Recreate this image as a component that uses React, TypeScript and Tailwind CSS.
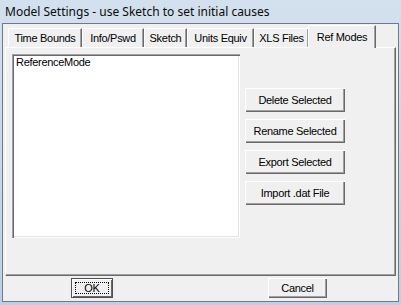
const tabs = [
  { label: "Time Bounds", width: 74 },
  { label: "Info/Pswd", width: 62 },
  { label: "Sketch", width: 43 },
  { label: "Units Equiv", width: 67 },
  { label: "XLS Files", width: 55 },
];

const actions = ["Delete Selected", "Rename Selected", "Export Selected", "Import .dat File"];

const raised =
  "shadow-[inset_1px_1px_#ffffff,inset_-1px_-1px_#696969,inset_-2px_-2px_#a0a0a0]";

export default function App() {
  return (
    <div
      className="flex h-[305px] w-[401px] flex-col overflow-hidden bg-gradient-to-b from-[#d3e0ee] via-[#c8d8ea] to-[#bccfe4] text-black"
      style={{ fontFamily: '"Liberation Sans", Arial, sans-serif' }}
    >
      {/* title bar */}
      <div
        className="flex h-[23px] shrink-0 items-center pl-[5px] text-[12px] text-[#0b0b0b]"
        style={{ fontFamily: '"Noto Sans", "Open Sans", sans-serif' }}
      >
        Model Settings - use Sketch to set initial causes
      </div>

      {/* client area */}
      <div className="mx-[2px] flex h-[279px] flex-col border border-[#6f7a86] bg-[#f0f0f0] pl-[2px] pr-[2px] pt-[1px] text-[11px] leading-[13px] tracking-[-0.3px]">
        {/* tab strip */}
        <div className="flex h-[22px] items-end pl-[3px]">
          {tabs.map((tab) => (
            <div
              key={tab.label}
              className="flex h-[19px] items-center justify-center border-l border-t border-white border-r border-r-[#696969] shadow-[inset_-1px_0_#a0a0a0]"
              style={{ width: tab.width }}
            >
              {tab.label}
            </div>
          ))}
          <div className="relative z-10 -mb-[1px] -ml-[1px] flex h-[23px] w-[68px] items-start justify-center border-l border-t border-white border-r border-r-[#696969] bg-[#f0f0f0] pt-[5px] shadow-[inset_-1px_0_#a0a0a0]">
            Ref Modes
          </div>
        </div>

        {/* tab panel */}
        <div className="flex h-[229px] border-l border-t border-white border-r border-b border-r-[#696969] border-b-[#696969] pl-[6px] pt-[6px] shadow-[inset_-1px_-1px_#a0a0a0]">
          <div className="h-[184px] w-[228px] bg-white pl-[4px] pt-[2px] shadow-[inset_1px_1px_#a0a0a0,inset_2px_2px_#696969,inset_-1px_-1px_#ffffff,inset_-2px_-2px_#e3e3e3]">
            ReferenceMode
          </div>
          <div className="ml-[5px] mt-[34px] flex flex-col gap-[7px]">
            {actions.map((a) => (
              <button key={a} className={`h-[24px] w-[100px] bg-[#f0f0f0] ${raised}`}>
                {a}
              </button>
            ))}
          </div>
        </div>

        {/* dialog buttons */}
        <div className="mt-[2px] flex">
          <button className="relative ml-[66px] h-[20px] w-[42px] border border-[#505050] bg-[#f0f0f0] shadow-[inset_1px_1px_#ffffff,inset_-1px_-1px_#696969]">
            <span className="absolute inset-[3px] border border-dotted border-black" />
            OK
          </button>
          <button className={`ml-[155px] h-[20px] w-[59px] bg-[#f0f0f0] ${raised}`}>
            Cancel
          </button>
        </div>
      </div>
    </div>
  );
}
